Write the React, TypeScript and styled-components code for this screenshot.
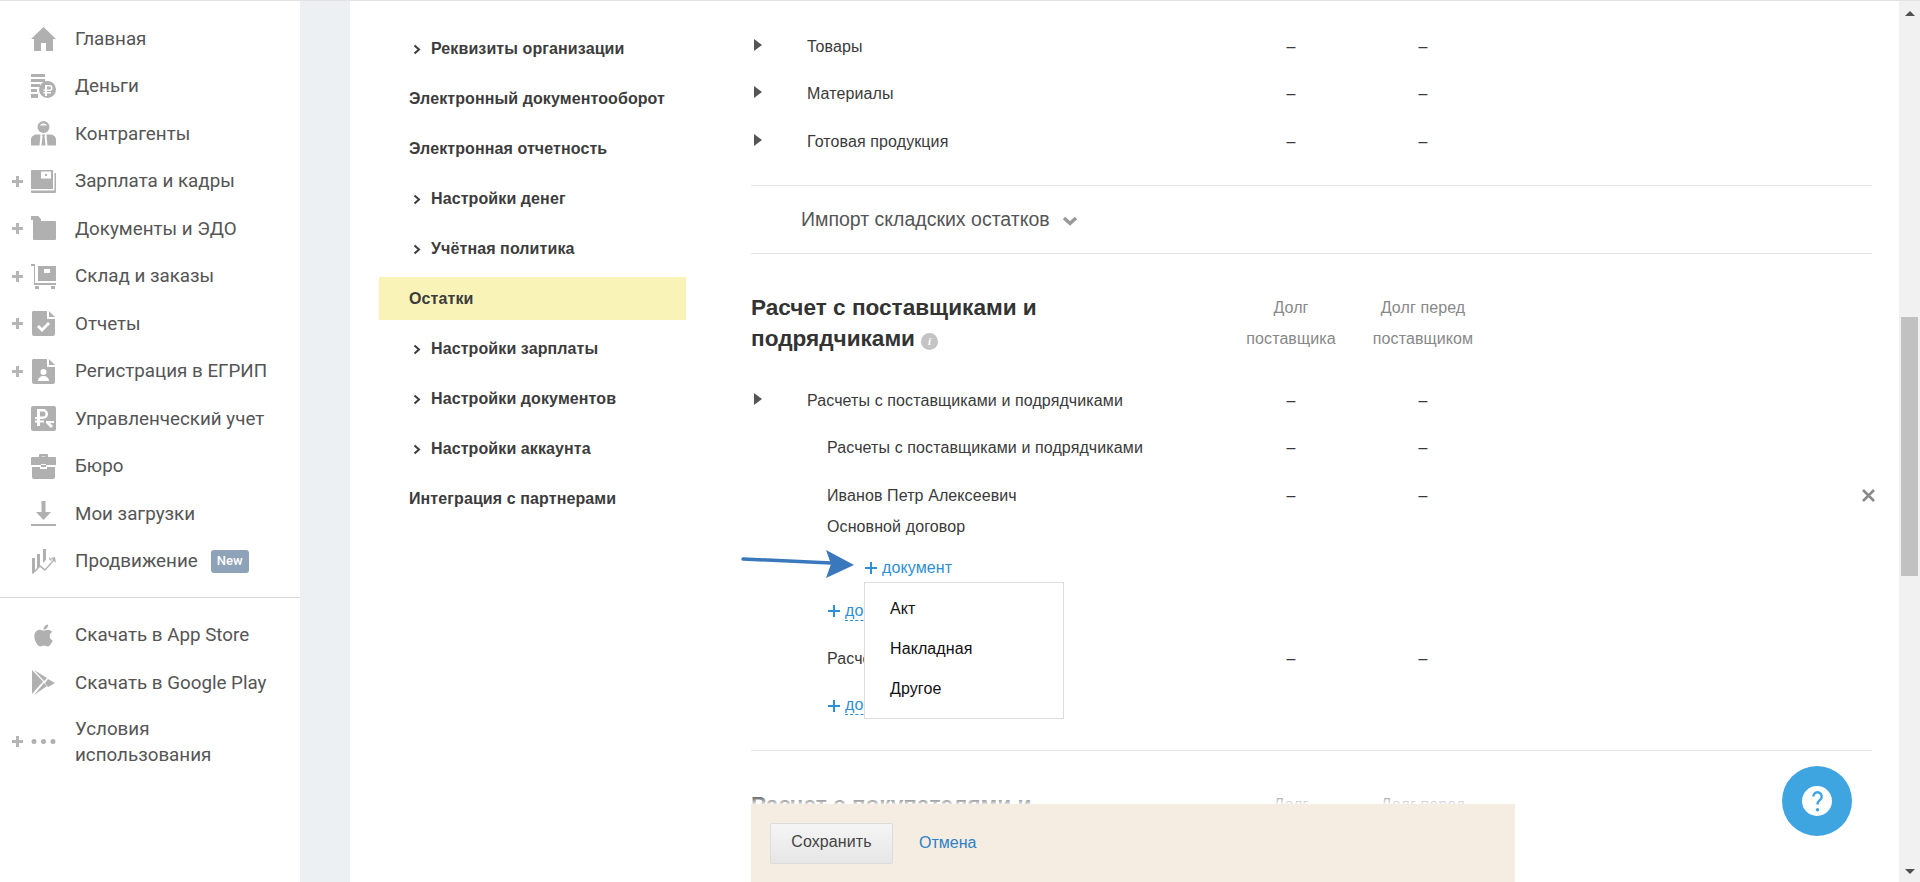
import React from "react";
import styled, { createGlobalStyle } from "styled-components";
import { FaApple } from "react-icons/fa";

const GlobalStyle = createGlobalStyle`
  html, body {
    margin: 0;
    padding: 0;
    height: 882px;
    overflow: hidden;
    background: #fff;
    font-family: "Liberation Sans", Arial, sans-serif;
  }
  * { box-sizing: border-box; }
`;

const Page = styled.div`
  position: relative;
  display: flex;
  width: 1920px;
  height: 882px;
  overflow: hidden;
  border-top: 1px solid #e2e2e2;
`;

const Sidebar = styled.aside`
  flex: 0 0 300px;
  padding-top: 14px;
  font-family: Roboto, sans-serif;
`;

const NavList = styled.ul`
  list-style: none;
  margin: 0;
  padding: 0;
`;

const NavRow = styled.li<{ $tall?: boolean }>`
  display: flex;
  align-items: center;
  height: ${(p) => (p.$tall ? "70px" : "47.5px")};
  padding-left: 12px;
  font-size: 18.8px;
  line-height: 26px;
  color: #555;
  white-space: nowrap;
`;

const NavPlus = styled.span`
  display: flex;
  flex: 0 0 19px;
`;

const NavIcon = styled.span`
  flex: 0 0 25px;
  width: 25px;
  height: 25px;
  margin-right: 19px;
  color: #b0b0b0;
  svg {
    display: block;
    width: 25px;
    height: 25px;
    fill: currentColor;
  }
`;

const NewBadge = styled.span`
  margin-left: 13px;
  padding: 0 6px;
  height: 23px;
  line-height: 21px;
  border-radius: 3px;
  background: #8ea2b8;
  color: #fff;
  font-size: 13px;
  font-weight: 500;
`;

const SideDivider = styled.hr`
  margin: 11.5px 0 14px;
  border: 0;
  border-top: 1px solid #d8d8d8;
`;

const Stripe = styled.div`
  flex: 0 0 50px;
  background: #ecf0f3;
`;

const Content = styled.div`
  flex: 1;
  display: flex;
  min-width: 0;
`;

const Settings = styled.nav`
  flex: 0 0 401px;
  padding: 22px 0 0 29px;
`;

const SettingsItem = styled.div<{ $active?: boolean }>`
  display: flex;
  align-items: center;
  width: 307px;
  height: ${(p) => (p.$active ? "43px" : "50px")};
  margin: ${(p) => (p.$active ? "3.5px 0" : "0")};
  padding: 2px 0 0 30px;
  background: ${(p) => (p.$active ? "#faf3b8" : "transparent")};
  color: #3c3c3c;
  font-size: 16px;
  letter-spacing: 0.1px;
  font-weight: 700;
  white-space: nowrap;
`;

const Chevron = styled.svg`
  flex: 0 0 8px;
  width: 8px;
  height: 11px;
  margin: 0 10px 0 4px;
`;

const Main = styled.main`
  flex: 0 0 1121px;
  padding-top: 21.5px;
`;

const TableRow = styled.div`
  position: relative;
  display: grid;
  grid-template-columns: 56px 418px 132px 132px;
  align-items: center;
  height: 47.5px;
  padding-top: 1px;
  font-size: 16px;
  letter-spacing: 0.1px;
  color: #3a3a3a;
`;

const Caret = styled.span`
  width: 0;
  height: 0;
  margin: -4px 0 0 3px;
  border-top: 6.5px solid transparent;
  border-bottom: 6.5px solid transparent;
  border-left: 8px solid #555;
`;

const NameCell = styled.span<{ $indent?: boolean }>`
  grid-column: 2;
  padding-left: ${(p) => (p.$indent ? "20px" : "0")};
  white-space: nowrap;
`;

const Amount = styled.span`
  text-align: center;
`;

const Rule = styled.hr<{ $top?: number }>`
  margin: ${(p) => p.$top ?? 0}px 0 0;
  border: 0;
  border-top: 1px solid #e6e6e6;
`;

const ImportRow = styled.div`
  display: flex;
  align-items: center;
  gap: 12px;
  height: 67px;
  padding-left: 50px;
  font-size: 19.5px;
  color: #555;
`;

const ImportChevron = styled.svg`
  width: 16px;
  height: 10px;
  margin-top: 3px;
`;

const Section = styled.section`
  padding-top: 38px;
`;

const SectionHead = styled.div`
  display: grid;
  grid-template-columns: 474px 132px 132px;
  align-items: start;
  height: 85px;
`;

const SectionTitle = styled.h2`
  margin: 0;
  font-size: 22.6px;
  line-height: 31px;
  font-weight: 700;
  color: #333;
`;

const ColumnTitle = styled.div`
  text-align: center;
  font-size: 16px;
  letter-spacing: 0.1px;
  line-height: 31px;
  color: #888;
`;

const InfoDot = styled.span`
  display: inline-block;
  width: 17px;
  height: 17px;
  margin-left: 6px;
  border-radius: 50%;
  background: #c4c4c4;
  color: #fff;
  font: italic 700 11px/17px "Liberation Serif", serif;
  text-align: center;
  vertical-align: 1px;
`;

const CloseMark = styled.svg`
  position: absolute;
  right: -3px;
  top: 17px;
  width: 13px;
  height: 13px;
`;

const ContractLine = styled.div`
  height: 27px;
  padding-left: 76px;
  font-size: 16px;
  letter-spacing: 0.1px;
  line-height: 16px;
  color: #3a3a3a;
`;

const AddLine = styled.div<{ $shift?: boolean; $before?: number; $after?: number }>`
  display: flex;
  align-items: center;
  height: ${(p) => (p.$shift ? "43px" : "44px")};
  margin: ${(p) => p.$before ?? 0}px 0 ${(p) => p.$after ?? 0}px;
  padding-left: ${(p) => (p.$shift ? "113px" : "76px")};
  font-size: 16px;
  letter-spacing: 0.1px;
  color: #2d8fd5;
`;

const Plus = styled.svg`
  width: 14px;
  height: 14px;
  margin-right: 4px;
  fill: #2d8fd5;
`;

const AddLink = styled.span<{ $dashed?: boolean }>`
  border-bottom: ${(p) => (p.$dashed ? "1px dashed #2d8fd5" : "0")};
`;

const DocMenu = styled.div`
  position: absolute;
  left: 864px;
  top: 581px;
  z-index: 3;
  width: 200px;
  height: 137px;
  padding: 6px 0 0 25px;
  background: #fff;
  border: 1px solid #dcdcdc;
`;

const DocMenuItem = styled.div`
  height: 40px;
  line-height: 40px;
  font-size: 16px;
  letter-spacing: 0.1px;
  color: #111;
`;

const Pointer = styled.svg`
  position: absolute;
  left: 740px;
  top: 545px;
  z-index: 3;
  width: 118px;
  height: 34px;
`;

const SaveBar = styled.div`
  position: absolute;
  left: 751px;
  bottom: 0;
  z-index: 4;
  display: flex;
  align-items: center;
  gap: 26px;
  width: 764px;
  height: 78px;
  padding: 0 0 0 19px;
  background: #f5ede1;
  &::before {
    content: "";
    position: absolute;
    left: 0;
    right: 0;
    top: -10px;
    height: 10px;
    background: linear-gradient(rgba(255, 255, 255, 0), rgba(255, 255, 255, 0.85));
  }
`;

const SaveButton = styled.button`
  width: 123px;
  height: 41px;
  padding: 0 0 3px;
  border: 1px solid #dcdcdc;
  border-radius: 2px;
  background: linear-gradient(#f5f5f5, #e6e6e6);
  color: #444;
  font: 16px "Liberation Sans", sans-serif;
  letter-spacing: 0.1px;
`;

const CancelLink = styled.span`
  color: #2d80c8;
  font-size: 16px;
`;

const HelpButton = styled.div`
  position: absolute;
  left: 1782px;
  top: 765px;
  z-index: 5;
  display: flex;
  align-items: center;
  justify-content: center;
  width: 70px;
  height: 70px;
  border-radius: 50%;
  background: #3fa5e0;
`;

const HelpInner = styled.span`
  display: flex;
  align-items: center;
  justify-content: center;
  width: 30px;
  height: 30px;
  border-radius: 50%;
  background: #fff;
`;

const Scrollbar = styled.div`
  flex: 0 0 21px;
  display: flex;
  flex-direction: column;
  align-items: center;
  margin-left: auto;
  background: #f1f1f1;
`;

const ScrollThumb = styled.div`
  flex: 0 0 259px;
  width: 17px;
  margin-top: 301px;
  background: #c1c1c1;
`;

const ScrollArrow = styled.span<{ $up?: boolean }>`
  margin: ${(p) => (p.$up ? "10px 0 0" : "auto 0 8px")};
  border-left: 5px solid transparent;
  border-right: 5px solid transparent;
  border-top: ${(p) => (p.$up ? "0" : "5px solid #505050")};
  border-bottom: ${(p) => (p.$up ? "5px solid #505050" : "0")};
`;

const icons: Record<string, React.ReactNode> = {
  home: <path d="M12.5 1 25 13h-3v11.500a.5.5 0 0 1-.5.5H15v-8h-5v8H3.500a.5.5 0 0 1-.5-.5V13H0z" />,
  money: (
    <>
      <path d="M0 0h14v3H0zM0 5h14v3H0zM0 10h9v3H0zM0 15h6v3H0zM0 20h7v4H0z" />
      <path fillRule="evenodd" d="M16.500 7a8.500 8.500 0 1 1 0 17 8.500 8.500 0 0 1 0-17zM14 11v4.500h-1.500V17H14v1h-1.500v1.500H14V22h2v-2.500h4V18h-4v-1h2.500a3 3 0 0 0 0-6zm2 1.500h2.500a1.500 1.500 0 0 1 0 3H16z" />
    </>
  ),
  people: (
    <>
      <path fillRule="evenodd" d="M12.500 0a6 6 0 1 1 0 12 6 6 0 0 1 0-12zm0 2.500a3.500 3.500 0 0 0-3.500 2h7a3.500 3.500 0 0 0-3.500-2z" />
      <path d="M6 13.500h3.500l-1 11H0v-6c0-3 3-5 6-5zM19 13.500h-3.500l1 11H25v-6c0-3-3-5-6-5zM11 13.500h3l-.5 2 1 9h-4l1-9z" />
    </>
  ),
  wallet: (
    <path
      fillRule="evenodd"
      d="M1 1h21v19H0V2a1 1 0 0 1 1-1zM10 2.500h10v7H10zM14 5h2v2h-2zM23.500 4H25v19a1 1 0 0 1-1 1H1a1 1 0 0 1-1-1v-1.500h23.500z"
    />
  ),
  folder: <path d="M0 0h7l3 3v2h14a1 1 0 0 1 1 1v17a1 1 0 0 1-1 1H3a1 1 0 0 1-1-1V4H0z" />,
  cart: <path fillRule="evenodd" d="M0 0h4v19h21v2H3V2H0zM7 2h18v15H7zm6 3v4h6V5zM4 22h4v3H4zM20 22h4v3h-4z" />,
  report: <path fillRule="evenodd" d="M2 0h14v8h8v15a2 2 0 0 1-2 2H3a2 2 0 0 1-2-2V2a2 2 0 0 1 1-2zm16 0 6 6h-6zM6 16l2-2 3 3 6-6 2 2-8 8z" />,
  person: <path fillRule="evenodd" d="M2 0h14v8h8v15a2 2 0 0 1-2 2H3a2 2 0 0 1-2-2V2a2 2 0 0 1 1-2zm16 0 6 6h-6zM12.500 10a3 3 0 1 0 0 6 3 3 0 0 0 0-6zM7 22c0-3 2.500-5 5.500-5s5.500 2 5.500 5z" />,
  ruble: <path fillRule="evenodd" d="M2 0h21a2 2 0 0 1 2 2v21a2 2 0 0 1-2 2H2a2 2 0 0 1-2-2V2a2 2 0 0 1 2-2zm4 3v8H4v2h2v1.500H4v2h2V20h3v-3.500h4v-2H9V13h3a5 5 0 0 0 0-10zm3 2.500h3a2.500 2.500 0 0 1 0 5H9zM15 15v2l5 5 2-2-3-3h4v-2z" />,
  case: <path fillRule="evenodd" d="M8 3V1a1 1 0 0 1 1-1h7a1 1 0 0 1 1 1v2h7a1 1 0 0 1 1 1v7H0V4a1 1 0 0 1 1-1zm2.500-.5V3h4v-.5zM1 13h8v2h7v-2h8v10a2 2 0 0 1-2 2H3a2 2 0 0 1-2-2zM10 10h5v3h-5z" />,
  download: <path d="M10.500 0h4v11H20l-7.500 8L5 11h5.500zM0 23h25v2H0z" />,
  chart: <path d="M12 0h3v11l-3 3zM6 5h3v11l-3 3zM18 8l3 3-1 1-2-2zM1 9h3v12l-3 3zM24 8l1 6-2-2-9 10-5-4-7 7-1-1 8-8 5 4 8-9-2-2z" />,
  play: <path d="M1 0l11 11.500L1 24zM3 0l13 8-3 3zM3 25l10-12 3 3zM17 9l7 4-7 4-3-4z" />,
  dots: <path d="M3 10a2.500 2.500 0 1 1 0 5 2.500 2.500 0 0 1 0-5zM12.500 10a2.500 2.500 0 1 1 0 5 2.500 2.500 0 0 1 0-5zM22 10a2.500 2.500 0 1 1 0 5 2.500 2.500 0 0 1 0-5z" />,
};

const mainNav = [
  { label: "Главная", icon: "home" },
  { label: "Деньги", icon: "money" },
  { label: "Контрагенты", icon: "people" },
  { label: "Зарплата и кадры", icon: "wallet", plus: true },
  { label: "Документы и ЭДО", icon: "folder", plus: true },
  { label: "Склад и заказы", icon: "cart", plus: true },
  { label: "Отчеты", icon: "report", plus: true },
  { label: "Регистрация в ЕГРИП", icon: "person", plus: true },
  { label: "Управленческий учет", icon: "ruble" },
  { label: "Бюро", icon: "case" },
  { label: "Мои загрузки", icon: "download" },
  { label: "Продвижение", icon: "chart", badge: true },
];

const settings = [
  { label: "Реквизиты организации", arrow: true },
  { label: "Электронный документооборот" },
  { label: "Электронная отчетность" },
  { label: "Настройки денег", arrow: true },
  { label: "Учётная политика", arrow: true },
  { label: "Остатки", active: true },
  { label: "Настройки зарплаты", arrow: true },
  { label: "Настройки документов", arrow: true },
  { label: "Настройки аккаунта", arrow: true },
  { label: "Интеграция с партнерами" },
];

const PlusMark = () => (
  <NavPlus>
    <svg width="11" height="11" viewBox="0 0 11 11" fill="#b5b5b5">
      <path d="M4 0h3v4h4v3H7v4H4V7H0V4h4z" />
    </svg>
  </NavPlus>
);

const Icon = ({ name }: { name: string }) => (
  <NavIcon>
    <svg viewBox="0 0 25 25">{icons[name]}</svg>
  </NavIcon>
);

const AddDocument = ({ dashed, shift, before, after }: { dashed?: boolean; shift?: boolean; before?: number; after?: number }) => (
  <AddLine $shift={shift} $before={before} $after={after}>
    <Plus viewBox="0 0 14 14">
      <path d="M6 1h2v5h5v2H8v5H6V8H1V6h5z" />
    </Plus>
    <AddLink $dashed={dashed}>документ</AddLink>
  </AddLine>
);

const Row = ({ name, caret, indent, close }: { name: string; caret?: boolean; indent?: boolean; close?: boolean }) => (
  <TableRow>
    {caret && <Caret />}
    <NameCell $indent={indent}>{name}</NameCell>
    <Amount>–</Amount>
    <Amount>–</Amount>
    {close && (
      <CloseMark viewBox="0 0 13 13" stroke="#8a8a8a" strokeWidth="2.600">
        <path d="M1 1l11 11M12 1L1 12" />
      </CloseMark>
    )}
  </TableRow>
);

const App = () => {
  return (
    <Page>
      <GlobalStyle />
      <Sidebar>
        <NavList>
          {mainNav.map((item) => (
            <NavRow key={item.label}>
              {item.plus ? <PlusMark /> : <NavPlus />}
              <Icon name={item.icon} />
              {item.label}
              {item.badge && <NewBadge>New</NewBadge>}
            </NavRow>
          ))}
        </NavList>
        <SideDivider />
        <NavList>
          <NavRow>
            <NavPlus />
            <NavIcon>
              <FaApple />
            </NavIcon>
            Скачать в App Store
          </NavRow>
          <NavRow>
            <NavPlus />
            <Icon name="play" />
            Скачать в Google Play
          </NavRow>
          <NavRow $tall>
            <PlusMark />
            <Icon name="dots" />
            <span>
              Условия
              <br />
              использования
            </span>
          </NavRow>
        </NavList>
      </Sidebar>
      <Stripe />
      <Content>
        <Settings>
          {settings.map((item) => (
            <SettingsItem key={item.label} $active={item.active}>
              {item.arrow && (
                <Chevron viewBox="0 0 8 11" fill="none" stroke="#3c3c3c" strokeWidth="2">
                  <path d="M1.500 1.500 6 5.500l-4.500 4" />
                </Chevron>
              )}
              {item.label}
            </SettingsItem>
          ))}
        </Settings>
        <Main>
          <Row name="Товары" caret />
          <Row name="Материалы" caret />
          <Row name="Готовая продукция" caret />
          <Rule $top={19.5} />
          <ImportRow>
            Импорт складских остатков
            <ImportChevron viewBox="0 0 16 10" fill="none" stroke="#999" strokeWidth="3.500">
              <path d="M2 2l6 5.500L14 2" />
            </ImportChevron>
          </ImportRow>
          <Rule />
          <Section>
            <SectionHead>
              <SectionTitle>
                Расчет с поставщиками и
                <br />
                подрядчиками
                <InfoDot>i</InfoDot>
              </SectionTitle>
              <ColumnTitle>
                Долг
                <br />
                поставщика
              </ColumnTitle>
              <ColumnTitle>
                Долг перед
                <br />
                поставщиком
              </ColumnTitle>
            </SectionHead>
            <Row name="Расчеты с поставщиками и подрядчиками" caret />
            <Row name="Расчеты с поставщиками и подрядчиками" indent />
            <Row name="Иванов Петр Алексеевич" indent close />
            <ContractLine>Основной договор</ContractLine>
            <AddDocument shift />
            <AddDocument dashed after={2} />
            <Row name="Расчеты с поставщиками" indent />
            <AddDocument dashed before={1} />
          </Section>
          <Rule $top={22} />
          <Section>
            <SectionHead>
              <SectionTitle>
                Расчет с покупателями и
                <br />
                заказчиками
              </SectionTitle>
              <ColumnTitle>Долг</ColumnTitle>
              <ColumnTitle>Долг перед</ColumnTitle>
            </SectionHead>
          </Section>
        </Main>
        <Scrollbar>
          <ScrollArrow $up />
          <ScrollThumb />
          <ScrollArrow />
        </Scrollbar>
      </Content>
      <Pointer viewBox="0 0 118 34">
        <path d="M3 13l88 4" stroke="#3a78bd" strokeWidth="3.500" strokeLinecap="round" />
        <path d="M86 4l28 15-28 13 5-14z" fill="#3a78bd" />
      </Pointer>
      <DocMenu>
        <DocMenuItem>Акт</DocMenuItem>
        <DocMenuItem>Накладная</DocMenuItem>
        <DocMenuItem>Другое</DocMenuItem>
      </DocMenu>
      <SaveBar>
        <SaveButton>Сохранить</SaveButton>
        <CancelLink>Отмена</CancelLink>
      </SaveBar>
      <HelpButton>
        <HelpInner>
          <svg width="11" height="21" viewBox="0 0 11 21">
            <path d="M1.300 5.500a4.200 4.200 0 1 1 7 3.100c-1.400 1.300-2.800 2-2.800 4.900" fill="none" stroke="#3fa5e0" strokeWidth="2.400" />
            <circle cx="5.500" cy="18.800" r="1.700" fill="#3fa5e0" />
          </svg>
        </HelpInner>
      </HelpButton>
    </Page>
  );
};

export default App;
